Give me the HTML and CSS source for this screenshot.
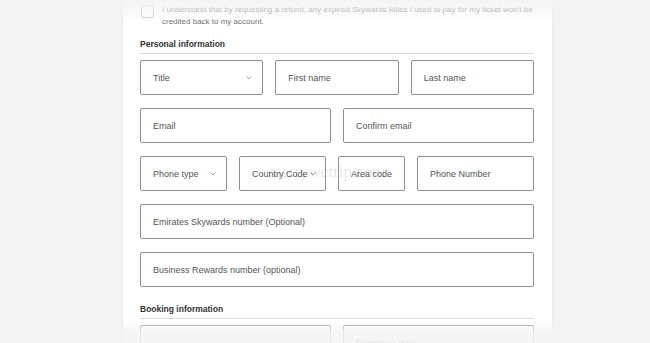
FILE: index.html
```html
<!DOCTYPE html>
<html lang="en">
<head>
    <meta charset="UTF-8">
    <title>Passenger details</title>
    <link rel="stylesheet" href="styles.css">
</head>
<body>
    <div class="page">
        <div class="card">
            <div class="consent">
                <span class="checkbox"></span>
                <p>I understand that by requesting a refund, any expired Skywards Miles I used to pay for my ticket won't be credited back to my account.</p>
            </div>

            <h4 class="section-title">Personal information</h4>
            <div class="row three">
                <div class="field select">Title <svg class="chev" width="6" height="4" viewBox="0 0 6 4"><path d="M0.5 0.5 L3 3 L5.5 0.5" /></svg></div>
                <div class="field">First name</div>
                <div class="field">Last name</div>
            </div>
            <div class="row two">
                <div class="field">Email</div>
                <div class="field">Confirm email</div>
            </div>
            <div class="row phone">
                <div class="field select">Phone type <svg class="chev" width="6" height="4" viewBox="0 0 6 4"><path d="M0.5 0.5 L3 3 L5.5 0.5" /></svg></div>
                <div class="field select tight">Country Code<svg class="chev" width="6" height="4" viewBox="0 0 6 4"><path d="M0.5 0.5 L3 3 L5.5 0.5" /></svg></div>
                <div class="field">Area code</div>
                <div class="field">Phone Number</div>
            </div>
            <div class="row">
                <div class="field">Emirates Skywards number (Optional)</div>
            </div>
            <div class="row">
                <div class="field">Business Rewards number (optional)</div>
            </div>

            <h4 class="section-title second">Booking information</h4>
            <div class="row two">
                <div class="field"></div>
                <div class="field">Departure date</div>
            </div>
        </div>

        <span class="watermark">merrywetrip.com</span>
        <div class="fade-top"></div>
        <div class="fade-bottom"></div>
    </div>
</body>
</html>
```

FILE: styles.css
```css
body {
    margin: 0;
    background-color: #f4f4f4;
    font-family: "Liberation Sans", Arial, Helvetica, sans-serif;
}
.page {
    position: relative;
    height: 343px;
    overflow: hidden;
}
.card {
    margin-left: 123px;
    width: 429px;
    box-sizing: border-box;
    min-height: 343px;
    padding: 4px 18px 0 17px;
    background-color: white;
    box-shadow: 0 0 4px rgba(0, 0, 0, 0.08);
}
.consent {
    display: flex;
    gap: 8px;
    padding-left: 1px;
}
.checkbox {
    flex: none;
    width: 11px;
    height: 11px;
    margin-top: 1px;
    border: 1px solid #c4c4c4;
    border-radius: 2px;
}
.consent p {
    margin: 0;
    font-size: 8px;
    line-height: 12px;
    color: #666;
}
.section-title {
    margin: 10px 0 6px 0;
    padding-bottom: 3px;
    border-bottom: 1px solid #dcdcdc;
    font-size: 8.5px;
    line-height: 12px;
    font-weight: bold;
    color: #333;
}
.section-title.second {
    margin-top: 16px;
}
.row {
    display: grid;
    gap: 12px;
    margin-bottom: 13px;
}
.row.three {
    grid-template-columns: 1fr 1fr 1fr;
}
.row.two {
    grid-template-columns: 1fr 1fr;
}
.row.phone {
    grid-template-columns: 87px 87px 67px 1fr;
}
.field {
    display: flex;
    align-items: center;
    justify-content: space-between;
    height: 35px;
    box-sizing: border-box;
    padding: 0 12px;
    border: 1px solid #8f8f8f;
    border-radius: 2px;
    font-size: 9px;
    color: #555;
    white-space: nowrap;
}
.field.tight {
    justify-content: flex-start;
    gap: 2px;
    padding-right: 0;
}
.chev {
    flex: none;
    fill: none;
    stroke: #999;
    stroke-width: 0.9;
    margin-right: -2px;
}
.field.tight .chev {
    margin-right: 0;
}
.watermark {
    position: absolute;
    left: 268px;
    top: 162px;
    font-family: "Liberation Serif", serif;
    font-size: 17px;
    color: rgba(0, 0, 0, 0.11);
    pointer-events: none;
}
.fade-top {
    position: absolute;
    left: 0;
    right: 0;
    top: 0;
    height: 24px;
    background: linear-gradient(rgba(244, 244, 244, 0.95), rgba(244, 244, 244, 0.6) 45%, rgba(244, 244, 244, 0));
}
.fade-bottom {
    position: absolute;
    left: 0;
    right: 0;
    bottom: 0;
    height: 22px;
    background: linear-gradient(rgba(244, 244, 244, 0), rgba(244, 244, 244, 0.85) 45%, rgba(244, 244, 244, 0.9));
}
```
